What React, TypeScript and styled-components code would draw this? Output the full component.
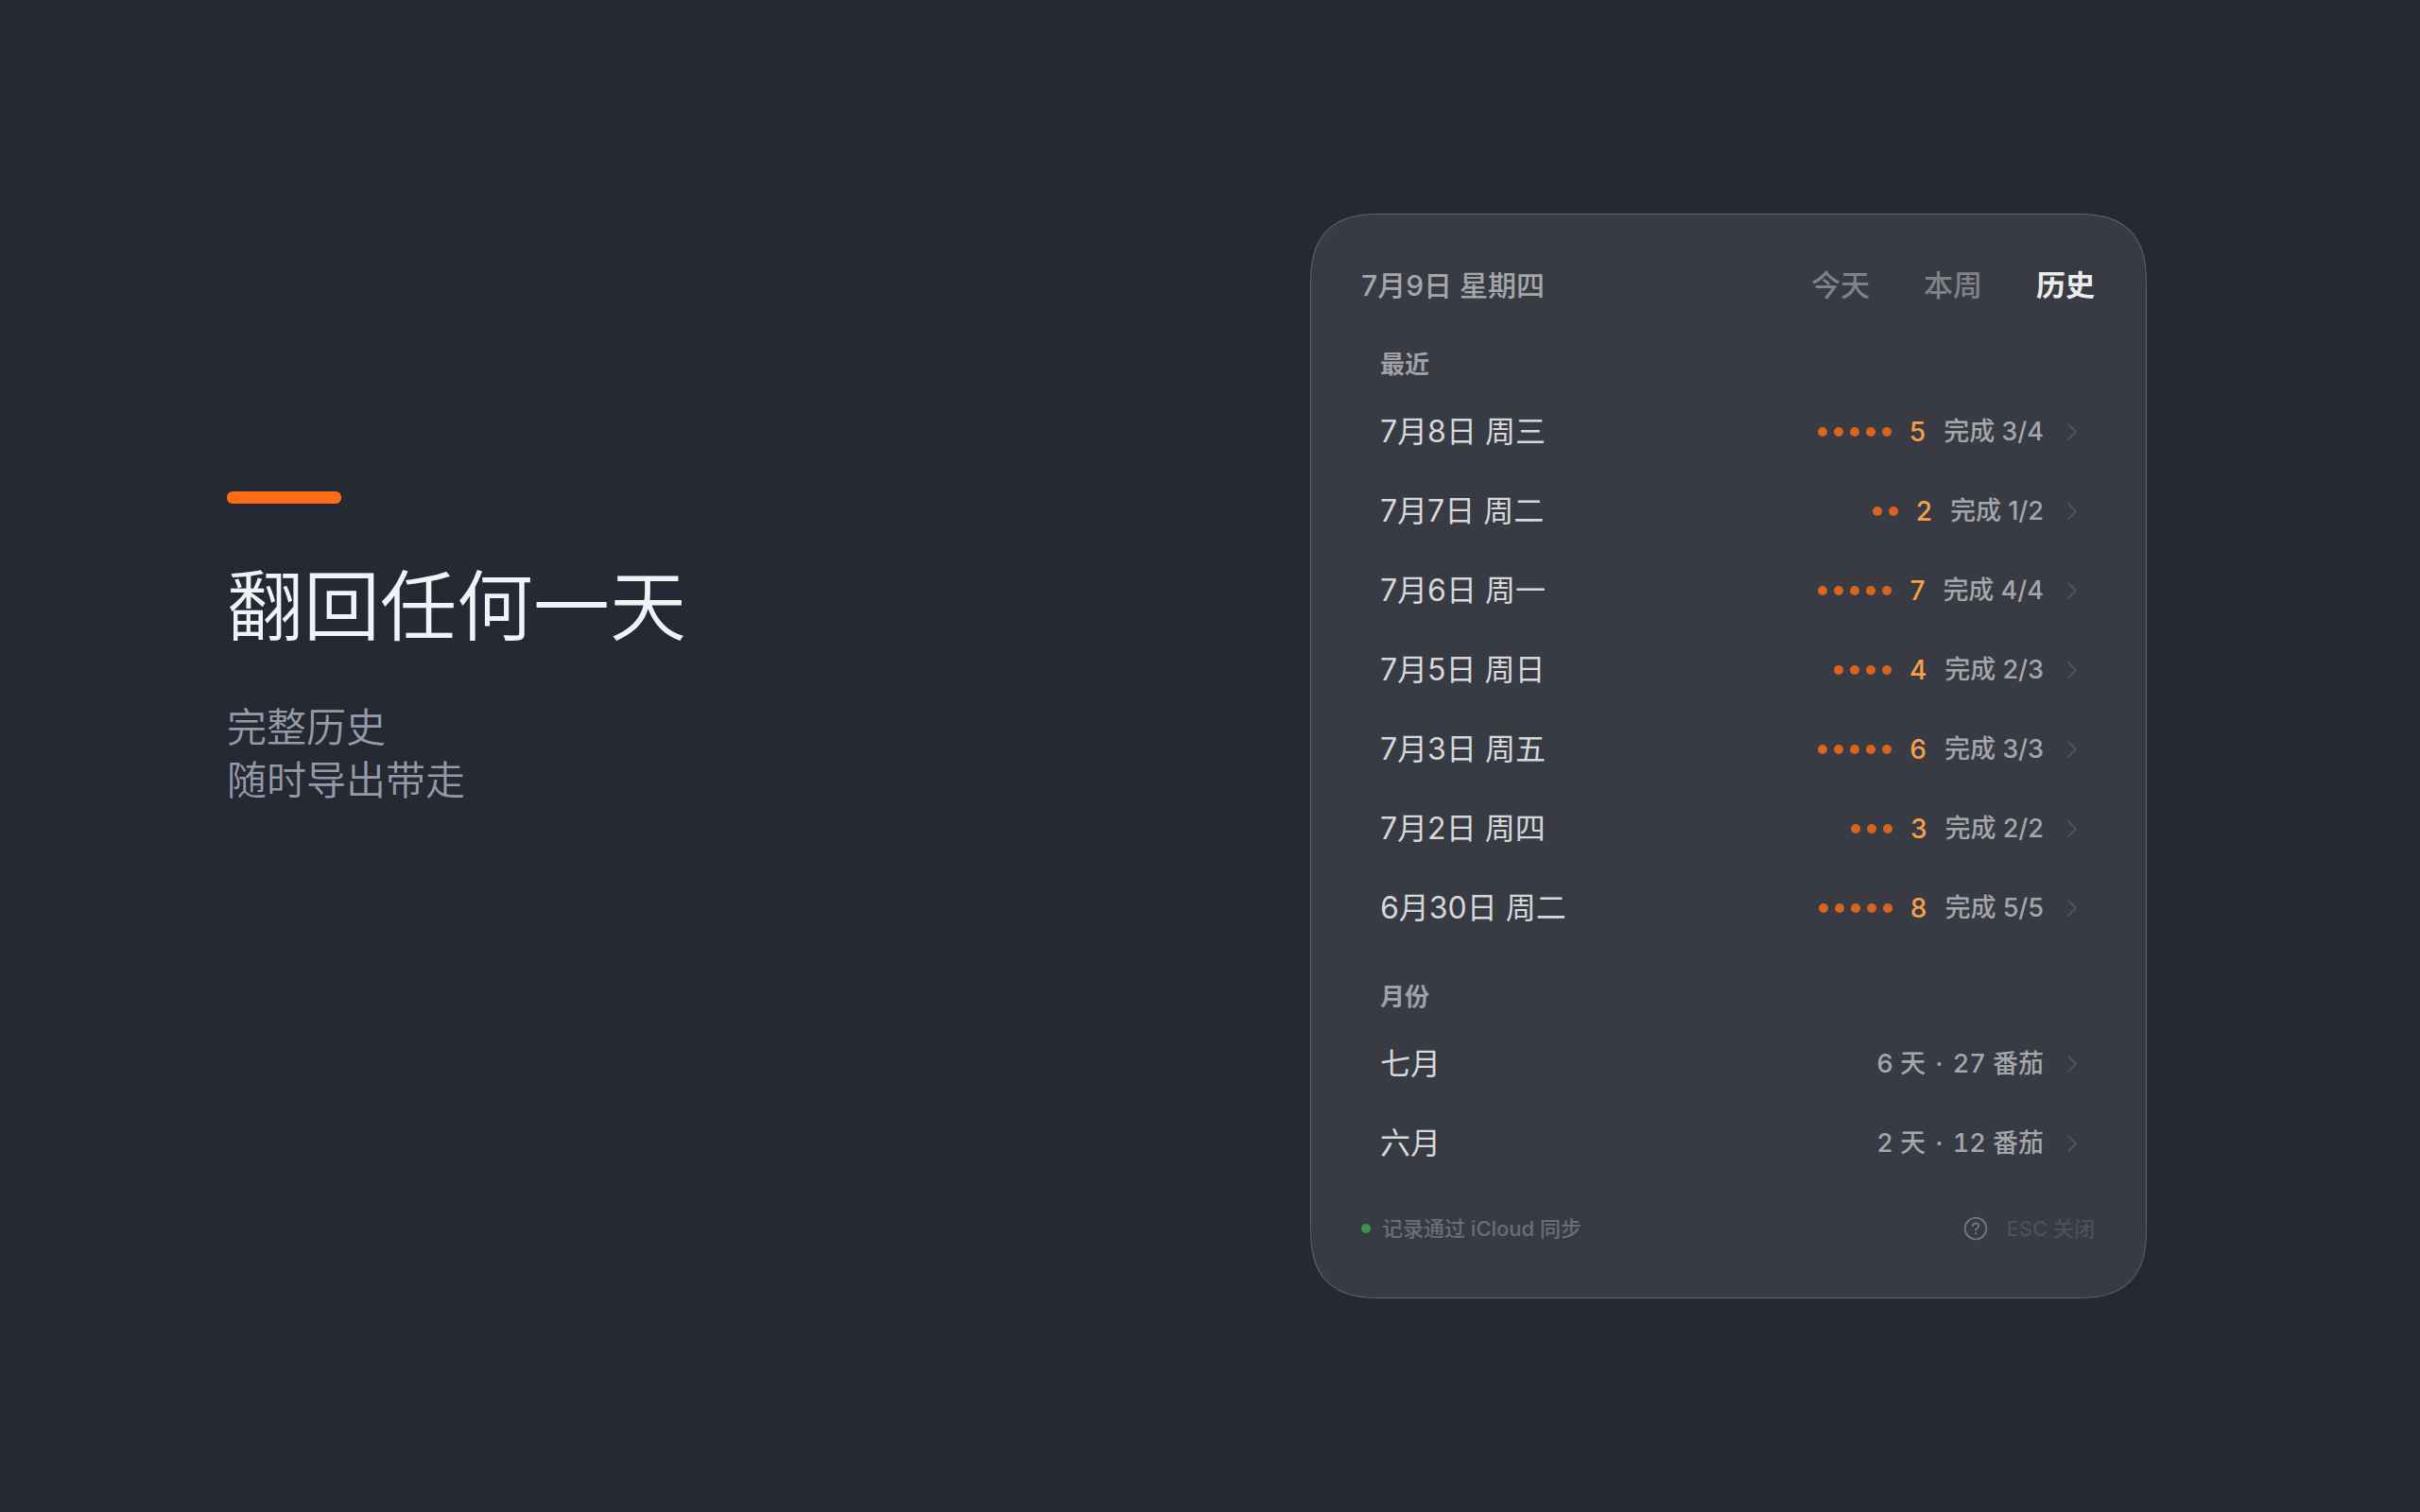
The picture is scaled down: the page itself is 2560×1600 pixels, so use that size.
import React, { useState } from "react";
import styled, { createGlobalStyle } from "styled-components";

const GlobalStyle = createGlobalStyle`
  *, *::before, *::after { box-sizing: border-box; }
  html, body { margin: 0; background: #252933; }
  body {
    font-family: Inter, "Noto Sans CJK SC", sans-serif;
    -webkit-font-smoothing: antialiased;
  }
  h1, h2, p, ul { margin: 0; padding: 0; }
  ul { list-style: none; }
  button {
    margin: 0;
    padding: 0;
    border: 0;
    background: none;
    color: inherit;
    font: inherit;
    text-align: left;
    cursor: pointer;
  }
`;

const Page = styled.main`
  min-height: 100vh;
  padding: 80px 289px 80px 240px;
  display: flex;
  align-items: center;
  justify-content: space-between;
  gap: 80px;
`;

const Intro = styled.section`
  padding-bottom: 230px;
  font-family: "Noto Sans CJK SC", sans-serif;
  font-weight: 350;
`;

const Accent = styled.div`
  width: 121px;
  height: 13px;
  border-radius: 6px;
  background: #ff6b17;
`;

const Title = styled.h1`
  margin-top: 43px;
  font-size: 81px;
  line-height: 120px;
  font-weight: 350;
  color: #f2f3f7;
`;

const Subtitle = styled.p`
  margin-top: 43px;
  font-size: 42px;
  line-height: 56px;
  color: #959aa7;
`;

const Card = styled.section`
  width: 885px;
  padding: 43px 54px 53px 53px;
  border: 1px solid #5f626b;
  border-radius: 62px;
  background: #383b44;

  @supports (corner-shape: superellipse(1.4)) {
    border-radius: 76px;
    corner-shape: superellipse(1.4);
  }
`;

const Header = styled.header`
  display: flex;
  align-items: center;
  justify-content: space-between;
  height: 64px;
`;

const Today = styled.h2`
  font-size: 30px;
  line-height: 40px;
  font-weight: 500;
  color: #a5a6aa;
`;

const Tabs = styled.nav`
  display: flex;
  gap: 57px;
`;

const Tab = styled.button<{ $active: boolean }>`
  font-size: 31px;
  line-height: 40px;
  font-weight: ${(p) => (p.$active ? 700 : 500)};
  color: ${(p) => (p.$active ? "#ececed" : "#808287")};
`;

const Group = styled.section`
  padding: 0 18px 0 20px;
`;

const GroupLabel = styled.h2`
  margin: 32px 0 9px;
  font-size: 26px;
  line-height: 40px;
  font-weight: 600;
  color: #a0a1a6;
`;

const Row = styled.button`
  width: 100%;
  height: 84px;
  display: flex;
  align-items: center;
`;

const RowName = styled.span`
  flex: 1;
  font-size: 32px;
  line-height: 40px;
  font-weight: 400;
  color: #d6d7d9;
`;

const Dots = styled.span`
  display: flex;
  gap: 7px;
`;

const Dot = styled.span<{ $color: string }>`
  width: 10px;
  height: 10px;
  border-radius: 50%;
  background: ${(p) => p.$color};
`;

const Count = styled.span`
  margin-left: 19px;
  font-size: 28px;
  line-height: 40px;
  font-weight: 500;
  color: #f5a04a;
`;

const Meta = styled.span`
  margin: 0 24px 0 19px;
  font-size: 27px;
  line-height: 40px;
  font-weight: 500;
  color: #a5a6aa;
`;

const Summary = styled(Meta)`
  font-variant-numeric: tabular-nums;
`;

const Separator = styled.span`
  margin: 0 3px;
`;

const Footer = styled.footer`
  margin-top: 28px;
  height: 40px;
  display: flex;
  align-items: center;
  justify-content: space-between;
  font-size: 22px;
  line-height: 40px;
  font-weight: 500;
`;

const Sync = styled.p`
  display: flex;
  align-items: center;
  gap: 12px;
  color: #6b6d74;
`;

const Actions = styled.div`
  display: flex;
  align-items: center;
  gap: 20px;
`;

const HelpButton = styled.button`
  display: flex;
  color: #74767c;
`;

const CloseButton = styled.button`
  color: #4d5058;
`;

const Chevron = () => (
  <svg width="12" height="20" viewBox="0 0 12 20" fill="none" aria-hidden="true">
    <path d="M2 2L10 10L2 18" stroke="#50535b" strokeWidth="2" strokeLinecap="round" strokeLinejoin="round" />
  </svg>
);

const HelpIcon = () => (
  <svg width="26" height="26" viewBox="0 0 26 26" fill="none" stroke="currentColor" strokeWidth="1.8" strokeLinecap="round" aria-hidden="true">
    <circle cx="13" cy="13" r="11.3" />
    <path d="M9.8 10.2C9.9 8.5 11.2 7.5 13 7.5C14.9 7.5 16.2 8.6 16.2 10.2C16.2 11.5 15.5 12.1 14.5 12.8C13.5 13.4 13.1 13.9 13.1 14.9" />
    <circle cx="13.1" cy="18.1" r="1.2" fill="currentColor" stroke="none" />
  </svg>
);

const MAX_DOTS = 5;

const days = [
  { name: "7月8日 周三", count: 5, done: "3/4" },
  { name: "7月7日 周二", count: 2, done: "1/2" },
  { name: "7月6日 周一", count: 7, done: "4/4" },
  { name: "7月5日 周日", count: 4, done: "2/3" },
  { name: "7月3日 周五", count: 6, done: "3/3" },
  { name: "7月2日 周四", count: 3, done: "2/2" },
  { name: "6月30日 周二", count: 8, done: "5/5" },
];

const months = [
  { name: "七月", days: 6, total: 27 },
  { name: "六月", days: 2, total: 12 },
];

const tabs = ["今天", "本周", "历史"];

export default function App() {
  const [active, setActive] = useState("历史");
  return (
    <>
      <GlobalStyle />
      <Page lang="zh-CN">
        <Intro>
          <Accent />
          <Title>翻回任何一天</Title>
          <Subtitle>
            完整历史
            <br />
            随时导出带走
          </Subtitle>
        </Intro>
        <Card>
          <Header>
            <Today>7月9日 星期四</Today>
            <Tabs>
              {tabs.map((tab) => (
                <Tab key={tab} type="button" $active={tab === active} onClick={() => setActive(tab)}>
                  {tab}
                </Tab>
              ))}
            </Tabs>
          </Header>
          <Group>
            <GroupLabel>最近</GroupLabel>
            <ul>
              {days.map((day) => (
                <li key={day.name}>
                  <Row type="button">
                    <RowName>{day.name}</RowName>
                    <Dots>
                      {Array.from({ length: Math.min(day.count, MAX_DOTS) }, (_, i) => (
                        <Dot key={i} $color="#d9641f" />
                      ))}
                    </Dots>
                    <Count>{day.count}</Count>
                    <Meta>{`完成 ${day.done}`}</Meta>
                    <Chevron />
                  </Row>
                </li>
              ))}
            </ul>
          </Group>
          <Group>
            <GroupLabel>月份</GroupLabel>
            <ul>
              {months.map((month) => (
                <li key={month.name}>
                  <Row type="button">
                    <RowName>{month.name}</RowName>
                    <Summary>
                      {`${month.days} 天 `}
                      <Separator>·</Separator>
                      {` ${month.total} 番茄`}
                    </Summary>
                    <Chevron />
                  </Row>
                </li>
              ))}
            </ul>
          </Group>
          <Footer>
            <Sync>
              <Dot $color="#36954f" />
              记录通过 iCloud 同步
            </Sync>
            <Actions>
              <HelpButton type="button" aria-label="帮助">
                <HelpIcon />
              </HelpButton>
              <CloseButton type="button">ESC 关闭</CloseButton>
            </Actions>
          </Footer>
        </Card>
      </Page>
    </>
  );
}
